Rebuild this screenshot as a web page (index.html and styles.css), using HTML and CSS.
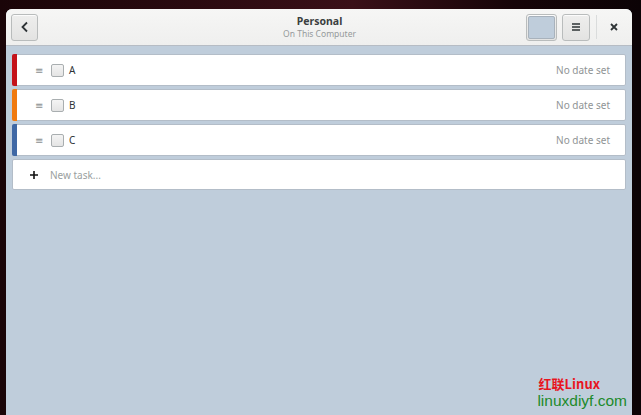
FILE: index.html
```html
<!doctype html>
<html lang="en">
  <head>
    <meta charset="UTF-8" />
    <title>Personal - To Do</title>
    <link rel="stylesheet" href="styles.css">
  </head>
  <body>
    <div class="window">
      <div class="headerbar">
        <div class="hb-start">
          <button class="hb-button back">
            <svg width="10" height="12" viewBox="0 0 10 12"><path d="M7 1.5 L2.5 6 L7 10.5" fill="none" stroke="#2e3436" stroke-width="1.8"/></svg>
          </button>
        </div>
        <div class="title">
          <div class="title-main">Personal</div>
          <div class="title-sub">On This Computer</div>
        </div>
        <div class="hb-end">
          <button class="hb-button swatch"><span class="swatch-color"></span></button>
          <button class="hb-button menu">
            <svg width="12" height="10" viewBox="0 0 12 10"><path d="M2 2h8M2 5h8M2 8h8" stroke="#2e3436" stroke-width="1.5"/></svg>
          </button>
          <div class="separator"></div>
          <button class="close">
            <svg width="10" height="10" viewBox="0 0 10 10"><path d="M2 2 L8 8 M8 2 L2 8" stroke="#2e3436" stroke-width="1.8"/></svg>
          </button>
        </div>
      </div>

      <div class="content">
        <div class="task">
          <span class="stripe red"></span>
          <span class="handle">≡</span>
          <span class="check"></span>
          <span class="task-name">A</span>
          <span class="task-date">No date set</span>
        </div>
        <div class="task">
          <span class="stripe orange"></span>
          <span class="handle">≡</span>
          <span class="check"></span>
          <span class="task-name">B</span>
          <span class="task-date">No date set</span>
        </div>
        <div class="task">
          <span class="stripe blue"></span>
          <span class="handle">≡</span>
          <span class="check"></span>
          <span class="task-name">C</span>
          <span class="task-date">No date set</span>
        </div>
        <div class="task new-task">
          <span class="plus">
            <svg width="10" height="10" viewBox="0 0 10 10"><path d="M5 1v8M1 5h8" stroke="#111" stroke-width="1.6"/></svg>
          </span>
          <span class="placeholder">New task...</span>
        </div>
      </div>

      <div class="watermark">
        <div class="wm-top">红联Linux</div>
        <div class="wm-bottom">linuxdiyf.com</div>
      </div>
    </div>
  </body>
</html>
```

FILE: styles.css
```css
html, body {
  height: 100%;
}

body {
  margin: 0;
  overflow: hidden;
  font-family: "Noto Sans", "DejaVu Sans", sans-serif;
  background: linear-gradient(90deg, #1a0508 0%, #2a0a10 30%, #3a1018 55%, #160408 80%, #0c0306 100%);
}

.window {
  margin: 9px 0 0 6px;
  width: 626px;
  height: 406px;
  border-radius: 6px 6px 0 0;
  background-color: #bfcddb;
  display: flex;
  flex-direction: column;
  position: relative;
  overflow: hidden;
}

.headerbar {
  height: 36px;
  background: linear-gradient(#f6f6f5, #efefee);
  border-bottom: 1px solid #b6bcc4;
  display: grid;
  grid-template-columns: 1fr auto 1fr;
  align-items: center;
  padding: 0 4px 0 5px;
}

.hb-start {
  display: flex;
}

.hb-end {
  display: flex;
  align-items: center;
  justify-content: flex-end;
}

.hb-button {
  height: 27px;
  border: 1px solid #b9bcbc;
  border-radius: 3px;
  background: linear-gradient(#eeeeed, #e3e3e2);
  padding: 0;
  display: flex;
  align-items: center;
  justify-content: center;
  box-shadow: inset 0 1px rgba(255, 255, 255, 0.8);
}

.back {
  width: 27px;
}

.title {
  text-align: center;
}

.title-main {
  font-size: 10.5px;
  font-weight: bold;
  color: #3b3f40;
  line-height: 13px;
}

.title-sub {
  font-size: 8.5px;
  color: #959a9b;
  line-height: 12px;
}

.swatch {
  width: 31px;
  margin-right: 5px;
}

.swatch-color {
  display: block;
  width: 25px;
  height: 21px;
  background-color: #bfcddb;
  border: 1px solid #a8b2bc;
  border-radius: 2px;
}

.menu {
  width: 28px;
}

.separator {
  width: 1px;
  height: 24px;
  background-color: #dadcdc;
  margin: 0 3px 0 6px;
}

.close {
  width: 28px;
  height: 27px;
  border: none;
  background: none;
  padding: 0;
  display: flex;
  align-items: center;
  justify-content: center;
}

.content {
  padding: 8px 6px;
  display: flex;
  flex-direction: column;
  gap: 3px;
}

.task {
  height: 30px;
  background-color: #ffffff;
  border: 1px solid #b3bdc8;
  border-radius: 2px;
  display: flex;
  align-items: center;
  font-size: 10px;
  color: #2e3436;
  position: relative;
}

.stripe {
  width: 5px;
  align-self: stretch;
  margin: -1px 0 -1px -1px;
  border-radius: 2px 0 0 2px;
}

.red {
  background-color: #c4121a;
}

.orange {
  background-color: #f07a0f;
}

.blue {
  background-color: #3f68a5;
}

.handle {
  width: 10px;
  margin-left: 18px;
  color: #8a8f90;
  font-size: 10px;
}

.check {
  width: 11px;
  height: 11px;
  margin-left: 6px;
  border: 1px solid #a9aeb0;
  border-radius: 2px;
  background: linear-gradient(#f4f4f4, #e4e4e4);
}

.task-name {
  margin-left: 5px;
  flex: 1;
}

.task-date {
  color: #8f9495;
  margin-right: 15px;
}

.new-task {
  height: 29px;
}

.plus {
  margin-left: 16px;
  display: flex;
}

.placeholder {
  margin-left: 11px;
  color: #9a9fa0;
}

.watermark {
  position: absolute;
  right: 5px;
  bottom: 6px;
  text-align: right;
  font-family: "Noto Sans CJK SC", "Liberation Sans", sans-serif;
}

.wm-top {
  color: #e8151e;
  font-weight: bold;
  font-size: 13px;
  line-height: 16px;
  margin-right: 27px;
}

.wm-bottom {
  color: #1c8a2a;
  font-family: "Liberation Sans", sans-serif;
  font-size: 15.5px;
  line-height: 17px;
}
```
